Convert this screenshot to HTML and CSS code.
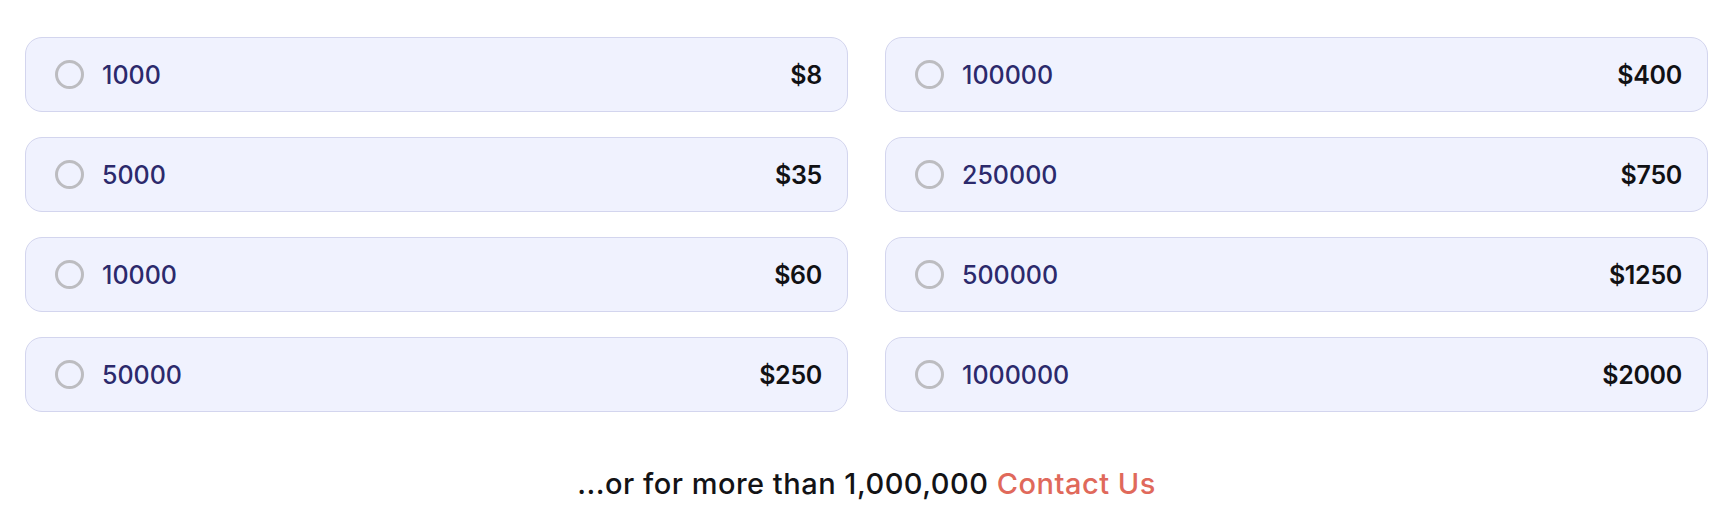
FILE: index.html
```html
<!DOCTYPE html>
<html lang="en">
<head>
<meta charset="utf-8">
<title>Pricing</title>
<link rel="stylesheet" href="styles.css">
</head>
<body>
<div class="page">
  <div class="options">
    <label class="option"><span class="radio"></span><span class="qty">1000</span><span class="price">$8</span></label>
    <label class="option"><span class="radio"></span><span class="qty">100000</span><span class="price">$400</span></label>
    <label class="option"><span class="radio"></span><span class="qty">5000</span><span class="price">$35</span></label>
    <label class="option"><span class="radio"></span><span class="qty">250000</span><span class="price">$750</span></label>
    <label class="option"><span class="radio"></span><span class="qty">10000</span><span class="price">$60</span></label>
    <label class="option"><span class="radio"></span><span class="qty">500000</span><span class="price">$1250</span></label>
    <label class="option"><span class="radio"></span><span class="qty">50000</span><span class="price">$250</span></label>
    <label class="option"><span class="radio"></span><span class="qty">1000000</span><span class="price">$2000</span></label>
  </div>
  <p class="more">...or for more than 1,000,000 <a class="contact" href="#">Contact Us</a></p>
</div>
</body>
</html>
```
FILE: styles.css
```css
html, body {
  margin: 0;
  padding: 0;
  background: #ffffff;
}
body {
  font-family: Inter, "Noto Sans", sans-serif;
}
.page {
  padding: 37px 19px 0 25px;
}
.options {
  display: grid;
  grid-template-columns: 1fr 1fr;
  column-gap: 37px;
  row-gap: 25px;
}
.option {
  display: flex;
  align-items: center;
  box-sizing: border-box;
  height: 75px;
  padding: 0 25px 0 29px;
  background: #f0f2fe;
  border: 1px solid #d3d5ee;
  border-radius: 17px;
}
.radio {
  box-sizing: border-box;
  width: 29px;
  height: 29px;
  border: 3px solid #bcbcc0;
  border-radius: 50%;
  flex: none;
}
.qty {
  margin-left: 18px;
  font-size: 25px;
  font-weight: 500;
  color: #2c2a6c;
  letter-spacing: 0;
}
.price {
  margin-left: auto;
  font-size: 25px;
  font-weight: 600;
  color: #111114;
  letter-spacing: -0.3px;
}
.more {
  margin: 55px 0 0;
  text-align: center;
  font-size: 29px;
  line-height: 33px;
  font-weight: 500;
  color: #131316;
  letter-spacing: 0.5px;
}
.contact {
  color: #e0695b;
  text-decoration: none;
}
```
